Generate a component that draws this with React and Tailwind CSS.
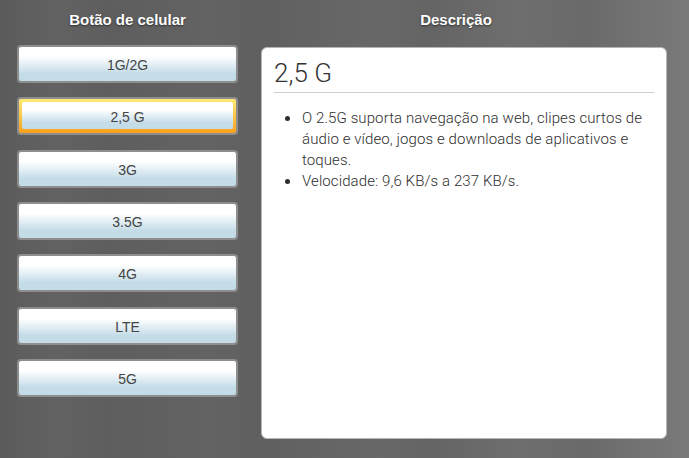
import React, { useState } from 'react';

const options = [
  { id: '1g', label: '1G/2G' },
  { id: '25g', label: '2,5 G' },
  { id: '3g', label: '3G' },
  { id: '35g', label: '3.5G' },
  { id: '4g', label: '4G' },
  { id: 'lte', label: 'LTE' },
  { id: '5g', label: '5G' },
];

const descriptions = {
  '25g': {
    title: '2,5 G',
    items: [
      'O 2.5G suporta navegação na web, clipes curtos de áudio e vídeo, jogos e downloads de aplicativos e toques.',
      'Velocidade: 9,6 KB/s a 237 KB/s.',
    ],
  },
};

const PhoneButton = ({ label, active, onClick }) => (
  <button
    onClick={onClick}
    className={`h-[38px] w-full rounded-[4px] border-2 border-[#8e8e8e] ${
      active ? 'pt-[3px] px-[3px] pb-[4px] bg-[linear-gradient(to_bottom,#ffea75,#fcc245_55%,#f7a11c)]' : 'p-0'
    }`}
  >
    <div className="h-full w-full rounded-[2px] flex items-center justify-center pt-[3px] bg-[linear-gradient(to_bottom,#ffffff_0%,#ffffff_28%,#c4dce8_78%,#c4dce8_100%)] text-[14px] text-[#444] font-['Liberation_Sans',Arial,sans-serif]">
      {label}
    </div>
  </button>
);

export default function App() {
  const [selected, setSelected] = useState('25g');
  const desc = descriptions[selected] || descriptions['25g'];

  return (
    <div className="w-[689px] h-[458px] overflow-hidden flex gap-[23px] pl-[17px] bg-[linear-gradient(to_right,#5b5b5b_0%,#626262_8%,#5e5e5e_16%,#636363_30%,#606060_38%,#686868_55%,#646464_62%,#6e6e6e_75%,#6a6a6a_85%,#7a7a7a_100%)]">
      {/* Left column */}
      <div className="w-[221px] flex flex-col">
        <h2 className="h-[45px] flex items-center justify-center pb-[4px] text-[15px] font-bold text-white font-['Liberation_Sans',Arial,sans-serif] [text-shadow:0_1px_2px_rgba(0,0,0,0.55)]">
          Botão de celular
        </h2>
        <div className="flex flex-col gap-[14.33px]">
          {options.map((o) => (
            <PhoneButton
              key={o.id}
              label={o.label}
              active={selected === o.id}
              onClick={() => setSelected(o.id)}
            />
          ))}
        </div>
      </div>

      {/* Right column */}
      <div className="w-[406px] flex flex-col">
        <h2 className="h-[47px] flex items-center justify-center pb-[6px] pr-[16px] text-[15px] font-bold text-white font-['Liberation_Sans',Arial,sans-serif] [text-shadow:0_1px_2px_rgba(0,0,0,0.55)]">
          Descrição
        </h2>
        <div className="h-[392px] bg-white rounded-[6px] border border-[#b5b5b5] px-[12px] pt-[9px] font-['Roboto',sans-serif]">
          <div className="text-[26px] font-light text-[#333] leading-[32px] pb-[3px] border-b border-[#cccccc]">
            {desc.title}
          </div>
          <ul className="list-disc pl-[27px] mt-[15px] text-[15px] font-light leading-[21px] tracking-[0.1px] text-[#2e2e2e] pr-[2px]">
            {desc.items.map((t, i) => (
              <li key={i} className="pl-[1px]">{t}</li>
            ))}
          </ul>
        </div>
      </div>
    </div>
  );
}
